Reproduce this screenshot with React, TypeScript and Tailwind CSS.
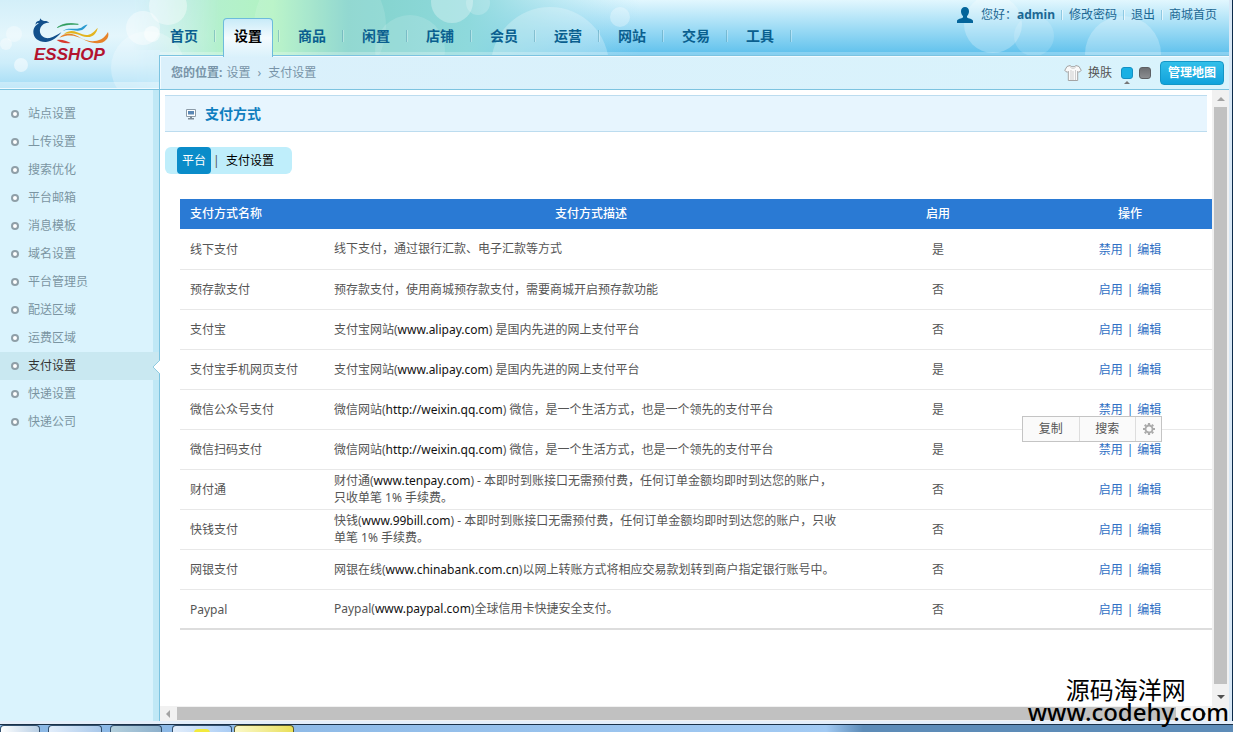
import { useState } from 'react';
import clsx from 'clsx';

const navItems = [
    '首页',
    '设置',
    '商品',
    '闲置',
    '店铺',
    '会员',
    '运营',
    '网站',
    '交易',
    '工具',
];

const sideItems = [
    '站点设置',
    '上传设置',
    '搜索优化',
    '平台邮箱',
    '消息模板',
    '域名设置',
    '平台管理员',
    '配送区域',
    '运费区域',
    '支付设置',
    '快递设置',
    '快递公司',
];

type Payment = {
    name: string;
    before: string;
    url?: string;
    after?: string;
    enabled: boolean;
    action: string;
};

const payments: Payment[] = [
    {
        name: '线下支付',
        before: '线下支付，通过银行汇款、电子汇款等方式',
        enabled: true,
        action: '禁用',
    },
    {
        name: '预存款支付',
        before: '预存款支付，使用商城预存款支付，需要商城开启预存款功能',
        enabled: false,
        action: '启用',
    },
    {
        name: '支付宝',
        before: '支付宝网站(',
        url: 'www.alipay.com',
        after: ') 是国内先进的网上支付平台',
        enabled: false,
        action: '启用',
    },
    {
        name: '支付宝手机网页支付',
        before: '支付宝网站(',
        url: 'www.alipay.com',
        after: ') 是国内先进的网上支付平台',
        enabled: true,
        action: '启用',
    },
    {
        name: '微信公众号支付',
        before: '微信网站(',
        url: 'http://weixin.qq.com',
        after: ') 微信，是一个生活方式，也是一个领先的支付平台',
        enabled: true,
        action: '禁用',
    },
    {
        name: '微信扫码支付',
        before: '微信网站(',
        url: 'http://weixin.qq.com',
        after: ') 微信，是一个生活方式，也是一个领先的支付平台',
        enabled: true,
        action: '禁用',
    },
    {
        name: '财付通',
        before: '财付通(',
        url: 'www.tenpay.com',
        after: ') - 本即时到账接口无需预付费，任何订单金额均即时到达您的账户，只收单笔 1% 手续费。',
        enabled: false,
        action: '启用',
    },
    {
        name: '快钱支付',
        before: '快钱(',
        url: 'www.99bill.com',
        after: ') - 本即时到账接口无需预付费，任何订单金额均即时到达您的账户，只收单笔 1% 手续费。',
        enabled: false,
        action: '启用',
    },
    {
        name: '网银支付',
        before: '网银在线(',
        url: 'www.chinabank.com.cn',
        after: ')以网上转账方式将相应交易款划转到商户指定银行账号中。',
        enabled: false,
        action: '启用',
    },
    {
        name: 'Paypal',
        before: 'Paypal(',
        url: 'www.paypal.com',
        after: ')全球信用卡快捷安全支付。',
        enabled: false,
        action: '启用',
    },
];

function HeaderArt() {
    return (
        <svg
            className="absolute inset-0 h-full w-full"
            viewBox="0 0 1233 90"
            preserveAspectRatio="xMinYMin slice"
            aria-hidden="true"
        >
            <defs>
                <linearGradient id="sky" x1="0" y1="0" x2="0" y2="1">
                    <stop offset="0" stopColor="#e2f7fe" />
                    <stop offset="0.5" stopColor="#9fdcf5" />
                    <stop offset="1" stopColor="#5dc0ec" />
                </linearGradient>
                <linearGradient id="green" x1="0" y1="0" x2="1" y2="0">
                    <stop offset="0" stopColor="#b9ead9" stopOpacity="0" />
                    <stop offset="0.14" stopColor="#b5eed5" />
                    <stop offset="0.32" stopColor="#b2f3c2" />
                    <stop offset="0.46" stopColor="#83d3cb" />
                    <stop offset="0.68" stopColor="#8ed9dc" />
                    <stop offset="1" stopColor="#9ddcf2" stopOpacity="0" />
                </linearGradient>
                <linearGradient id="corner" x1="0" y1="0" x2="0" y2="1">
                    <stop offset="0" stopColor="#d3eff9" />
                    <stop offset="0.4" stopColor="#e4f6fc" />
                    <stop offset="0.7" stopColor="#cdedfa" />
                    <stop offset="1" stopColor="#a0dbf5" />
                </linearGradient>
                <linearGradient id="cornerFade" x1="0" y1="0" x2="1" y2="0">
                    <stop offset="0.6" stopColor="#fff" />
                    <stop offset="1" stopColor="#000" />
                </linearGradient>
                <mask id="cornerMask">
                    <rect width="220" height="90" fill="url(#cornerFade)" />
                </mask>
            </defs>
            <rect width="1233" height="55" fill="url(#sky)" />
            <rect x="100" width="540" height="55" fill="url(#green)" />
            <rect width="160" y="50" height="40" fill="#bde8f8" />
            <rect
                width="220"
                height="90"
                fill="url(#corner)"
                mask="url(#cornerMask)"
            />
            <g fill="#fff">
                <circle cx="168" cy="6" r="19" opacity="0.4" />
                <circle cx="143" cy="28" r="17" opacity="0.4" />
                <circle cx="152" cy="34" r="8" opacity="0.5" />
                <circle cx="148" cy="68" r="37" opacity="0.25" />
                <circle cx="14" cy="34" r="8" opacity="0.35" />
                <circle cx="6" cy="44" r="6" opacity="0.4" />
                <circle cx="21" cy="65" r="7" opacity="0.5" />
                <circle cx="320" cy="26" r="66" opacity="0.12" />
                <circle cx="410" cy="50" r="35" opacity="0.14" />
                <circle cx="452" cy="2" r="21" opacity="0.3" />
                <circle cx="478" cy="3" r="12" opacity="0.2" />
                <circle cx="550" cy="66" r="59" opacity="0.25" />
                <circle cx="620" cy="17" r="10" opacity="0.3" />
                <circle cx="993" cy="24" r="29" opacity="0.25" />
                <circle cx="1034" cy="36" r="20" opacity="0.15" />
                <circle cx="1123" cy="54" r="38" opacity="0.25" />
            </g>
            <rect y="82" width="160" height="8" fill="#fff" opacity="0.35" />
            <rect
                x="160"
                y="52"
                width="1073"
                height="3"
                fill="#fff"
                opacity="0.25"
            />
        </svg>
    );
}

function Logo() {
    return (
        <a
            href="#home"
            className="relative flex w-40 shrink-0 flex-col pt-[17px] pl-[30px]"
        >
            <svg
                className="h-7 w-20"
                viewBox="90 50 240 84"
                fill="none"
                strokeLinecap="round"
                aria-hidden="true"
            >
                <path
                    d="M120 54c4 5 6 7 12 8 6-1 11 0 16 5-7 0-12 1-17 4-9 7-13 15-11 25 3 13 15 19 29 17 12-2 24-11 35-17-10 13-26 28-46 29-22 1-38-12-38-30 0-13 8-21 17-27-4-1-7 0-10 6-1-8 3-12 11-13 2-1 2-4 2-7z"
                    fill="#12508c"
                />
                <path
                    d="M173 81c14-10 28-14 62-9-22-1-38 0-62 9z"
                    fill="#2b9a57"
                    stroke="#2b9a57"
                    strokeWidth="2"
                />
                <path
                    d="M188 92c16-13 32-3 50-8 12-3 12-11 25-11-7 5-8 14-21 17-18 4-32-7-54 2z"
                    fill="#2a9bd0"
                />
                <path
                    d="M192 101c20-17 38-6 55 1 20 7 32-4 46-20-2 15-14 30-33 28-22-3-34-17-68-9z"
                    fill="#e3b420"
                />
                <path
                    d="M178 112c22-20 46-10 66 2 24 13 62 15 80-19 6 18-10 35-34 34-42-2-58-38-112-17z"
                    fill="#e6832a"
                />
                <path
                    d="M170 119c14-3 28 1 42 9-16 2-30-1-42-9z"
                    fill="#d83a2e"
                />
            </svg>
            <span className="pl-1 font-['Liberation_Sans',sans-serif] text-[17px] leading-5 font-bold text-[#b3132f] italic">
                ESSHOP
            </span>
        </a>
    );
}

function Divider() {
    return (
        <span className="h-2.5 w-0.5 border-r border-l border-r-white/60 border-l-[#8fc9e2]" />
    );
}

function UserBar() {
    return (
        <div className="absolute top-1 right-3 flex h-[22px] items-center gap-1.5 text-xs text-[#1b6793]">
            <svg
                className="mr-0.5 h-4 w-4"
                viewBox="0 0 16 16"
                fill="#04659b"
                aria-hidden="true"
            >
                <path d="M8 0c2.5 0 4 1.700 4 4.200 0 2-.8 3.800-2 4.800v1.400c1.200.9 6 1.400 6 3.600v2H0v-2c0-2.200 4.800-2.700 6-3.600V9C4.800 8 4 6.200 4 4.200 4 1.700 5.500 0 8 0z" />
            </svg>
            <span>
                您好：<b className="font-bold">admin</b>
            </span>
            <Divider />
            <a href="#password">修改密码</a>
            <Divider />
            <a href="#logout">退出</a>
            <Divider />
            <a href="#shop">商城首页</a>
        </div>
    );
}

function CrumbBar() {
    return (
        <div className="flex h-[35px] items-center justify-between border border-r-0 border-[#7cc3e0] bg-linear-to-r from-[#daf0fb] to-[#d9f3fc] pr-[5px] pl-[11px] text-xs text-[#7894a8] shadow-[inset_1px_1px_0_#f2fbff]">
            <div className="flex items-center gap-1">
                <b className="font-bold">您的位置:</b>
                <a href="#settings">设置</a>
                <span className="px-[3px]">›</span>
                <span>支付设置</span>
            </div>
            <div className="flex items-center">
                <svg
                    className="mr-1.5 h-[18px] w-[18px]"
                    viewBox="0 0 18 18"
                    aria-hidden="true"
                >
                    <path
                        d="M6 1.500c1 1.700 5 1.700 6 0l3 1 2.300 4-2.600 1.800-1-1V16.500H4.300V7.300l-1 1L.7 6.500l2.300-4z"
                        fill="#fafafa"
                        stroke="#a4a4a4"
                        strokeLinejoin="round"
                    />
                    <path
                        d="M6 2.500c1 2.500 5 2.500 6 0M7 6v10M9 7v9M11.500 6v10"
                        stroke="#cfcfcf"
                        fill="none"
                    />
                </svg>
                <span className="mr-[9px] text-[#555]">换肤</span>
                <button
                    aria-label="蓝色"
                    className="relative mr-1.5 h-3 w-3 rounded-[3px] border border-[#1490c4] bg-[#19b0e4]"
                >
                    <svg
                        className="absolute top-[13px] left-0.5 h-[3px] w-1.5"
                        viewBox="0 0 6 3"
                        aria-hidden="true"
                    >
                        <path d="M3 0l3 3H0z" fill="#777" />
                    </svg>
                </button>
                <button
                    aria-label="灰色"
                    className="mr-[9px] h-3 w-3 rounded-[3px] border border-[#5d5f63] bg-linear-to-b from-[#6c6e72] to-[#8b8d90]"
                />
                <button className="h-6 w-16 rounded border border-[#1496c6] bg-linear-to-b from-[#31bfe9] to-[#0fa2dc] text-xs font-bold text-white">
                    管理地图
                </button>
            </div>
        </div>
    );
}

function Sidebar({
    current,
    onSelect,
}: {
    current: string;
    onSelect: (s: string) => void;
}) {
    return (
        <aside className="w-[159px] shrink-0 border-r-[6px] border-[#c0e8f6] bg-[#daf3fd] pt-2.5">
            <ul>
                {sideItems.map((item) => (
                    <li key={item} className="relative">
                        <a
                            href="#menu"
                            onClick={() => onSelect(item)}
                            className={clsx(
                                'flex h-7 items-center gap-[9px] pl-[11px] text-xs',
                                item === current
                                    ? '-mr-1.5 bg-[#c9e8f1] text-[#333]'
                                    : 'text-[#7b95a2]'
                            )}
                        >
                            <i className="h-2 w-2 rounded-full border-2 border-[#8f9fa8] bg-white" />
                            {item}
                        </a>
                        {item === current && (
                            <svg
                                className="absolute top-2 -right-[7px] h-3.5 w-[7px]"
                                viewBox="0 0 7 14"
                                aria-hidden="true"
                            >
                                <path d="M7 0L0 7l7 7z" fill="#fff" />
                                <path
                                    d="M7 0L0 7l7 7"
                                    fill="none"
                                    stroke="#8fcbe0"
                                />
                            </svg>
                        )}
                    </li>
                ))}
            </ul>
        </aside>
    );
}

function PaymentTable() {
    return (
        <table className="w-full min-w-[1062px] table-fixed text-xs text-[#555]">
            <colgroup>
                <col className="w-36" />
                <col className="w-[534px]" />
                <col className="w-40" />
                <col />
            </colgroup>
            <thead>
                <tr className="h-[30px] bg-[#2a7ad4] text-white">
                    <th className="px-2.5 text-left font-medium">
                        支付方式名称
                    </th>
                    <th className="px-2.5 font-medium">支付方式描述</th>
                    <th className="font-medium">启用</th>
                    <th className="font-medium">操作</th>
                </tr>
            </thead>
            <tbody>
                {payments.map((p) => (
                    <tr
                        key={p.name}
                        className="h-10 border-b border-[#e8e8e8] last:border-b-2 last:border-[#ddd]"
                    >
                        <td className="px-2.5 pt-0.5">{p.name}</td>
                        <td className="pr-4 pl-2.5 leading-[17px]">
                            {p.before}
                            {p.url && (
                                <span className="text-[#111]">{p.url}</span>
                            )}
                            {p.after}
                        </td>
                        <td className="pt-0.5 text-center">
                            {p.enabled ? '是' : '否'}
                        </td>
                        <td className="pt-0.5">
                            <div className="flex justify-center gap-1 text-[#2f6fc4]">
                                <a href="#toggle">{p.action}</a>
                                <span>|</span>
                                <a href="#edit">编辑</a>
                            </div>
                        </td>
                    </tr>
                ))}
            </tbody>
        </table>
    );
}

function SelectionMenu() {
    return (
        <div className="absolute top-[217px] right-[50px] flex h-[26px] w-[140px] border border-[#c4c4c4] bg-[#fafafa] text-xs text-[#555]">
            <button className="flex-1 border-r border-[#ddd]">复制</button>
            <button className="flex-1 border-r border-[#ddd]">搜索</button>
            <button
                aria-label="选项"
                className="flex w-[25px] items-center justify-center"
            >
                <svg className="h-3 w-3" viewBox="0 0 12 12" fill="none">
                    <circle cx="6" cy="6" r="3.500" stroke="#aaa" strokeWidth="1.800" />
                    <path
                        d="M6 0v2M6 10v2M0 6h2M10 6h2M1.800 1.800l1.300 1.300M8.900 8.900l1.300 1.300M1.800 10.200l1.300-1.300M8.900 3.100l1.300-1.300"
                        stroke="#aaa"
                        strokeWidth="2.200"
                    />
                </svg>
            </button>
        </div>
    );
}

function Arrow({ d, color }: { d: string; color: string }) {
    return (
        <svg className="h-4 w-4 shrink-0" viewBox="0 0 16 16" aria-hidden="true">
            <path d={d} fill={color} />
        </svg>
    );
}

function Taskbar() {
    return (
        <footer className="h-[11px] shrink-0 bg-[#e4eefa] pt-[3px]">
            <div className="flex h-2 items-start border-t border-[#1b3148] bg-linear-to-r from-[#8db9e6] from-20% via-[#a2caf3] via-67% to-[#5d8cb8] to-70%">
                <span className="mr-2 h-2 w-10 rounded-t-sm border border-b-0 border-[#33506e] bg-linear-to-r from-white to-[#b9cfe5]" />
                <span className="mr-2 h-2 w-[54px] rounded-t-sm border border-b-0 border-[#33506e] bg-linear-to-r from-[#e3eefb] to-[#a9c8ea]" />
                <span className="mr-2.5 h-2 w-[52px] rounded-t-sm border border-b-0 border-[#33506e] bg-linear-to-r from-[#b4d0dd] to-[#8db0cc]" />
                <span className="mr-0.5 flex h-2 w-[60px] justify-center rounded-t-sm border border-b-0 border-[#33506e] bg-linear-to-r from-[#e3eefb] to-[#a9ccf4] pt-[3px]">
                    <i className="h-1 w-4 rounded-t-full bg-[#f2ea3c]" />
                </span>
                <span className="h-2 w-[60px] rounded-t-sm border border-b-0 border-[#5a5a30] bg-linear-to-r from-[#fbf9c8] to-[#e9df55]" />
            </div>
        </footer>
    );
}

export default function App() {
    const [tab, setTab] = useState<string>('设置');
    const [menu, setMenu] = useState<string>('支付设置');

    return (
        <div className="relative flex h-screen w-full flex-col overflow-hidden bg-white font-['Noto_Sans','Noto_Sans_CJK_SC',sans-serif]">
            <div className="flex min-h-0 flex-1 flex-col border-r border-[#0c2b4a]">
                <div className="flex min-h-0 flex-1 flex-col border-r-[3px] border-[#d8e8f6]">
                    <header className="relative flex h-[90px] shrink-0 overflow-hidden">
                        <HeaderArt />
                        <Logo />
                        <div className="absolute bottom-0 left-0 h-0.5 w-40 border-t border-b border-t-[#effaff] border-b-[#7cc3e0]" />
                        <div className="relative -ml-px flex min-w-0 flex-1 flex-col">
                            <nav className="-ml-2 flex h-[55px] items-end pl-px">
                                {navItems.map((item) => (
                                    <div
                                        key={item}
                                        className="relative z-10 flex w-16 justify-center"
                                    >
                                        <a
                                            href="#nav"
                                            onClick={() => setTab(item)}
                                            className={clsx(
                                                'flex w-[50px] justify-center text-sm font-bold',
                                                item === tab
                                                    ? '-mb-0.5 h-[39px] rounded-t border border-b-0 border-[#6dbbdc] bg-linear-to-b from-[#c8ebf8] via-[#f4fbfe] to-[#daf1fb] pt-[7px] text-black'
                                                    : 'h-[37px] pt-2 text-[#0a5f8f]'
                                            )}
                                        >
                                            {item}
                                        </a>
                                        <i className="absolute top-3 right-0 h-3 w-0.5 border-r border-l border-r-white/30 border-l-[#5d9fb4]/50" />
                                    </div>
                                ))}
                            </nav>
                            <CrumbBar />
                            <UserBar />
                        </div>
                    </header>
                    <div className="flex min-h-0 flex-1">
                        <Sidebar current={menu} onSelect={setMenu} />
                        <div className="flex min-w-0 flex-1 flex-col border-l border-[#7cc3e0]">
                            <div className="flex min-h-0 flex-1">
                                <main className="min-w-0 flex-1 overflow-hidden pt-[5px]">
                                    <h1 className="mx-[5px] flex h-[37px] items-center gap-2 border-t border-b border-[#bcdcef] bg-[#e7f5fe] pl-5 text-sm font-bold text-[#0f7ebf]">
                                        <svg
                                            className="h-3 w-3"
                                            viewBox="0 0 12 12"
                                            aria-hidden="true"
                                        >
                                            <path
                                                d="M1.500 1.500h9v7h-9z"
                                                fill="#fff"
                                                stroke="#8c9ba8"
                                            />
                                            <path
                                                d="M3 3h6v3.500H3z"
                                                fill="#5b88b5"
                                            />
                                            <path
                                                d="M5 8.500h2V10h2v1.500H3V10h2z"
                                                fill="#7d8b98"
                                            />
                                        </svg>
                                        支付方式
                                    </h1>
                                    <div className="mt-[15px] ml-[5px] flex h-[27px] w-fit items-center rounded-md bg-[#bfeefb] pr-[18px] pl-3 text-xs text-black">
                                        <button className="h-[27px] w-[34px] rounded bg-[#0a8cc9] text-white">
                                            平台
                                        </button>
                                        <span className="w-[15px] pl-0.5 text-[#555]">
                                            |
                                        </span>
                                        <button>支付设置</button>
                                    </div>
                                    <div className="relative mt-[25px] ml-5">
                                        <PaymentTable />
                                        <SelectionMenu />
                                    </div>
                                </main>
                                <div className="flex w-[17px] flex-col items-center bg-[#f1f1f1]">
                                    <Arrow
                                        d="M8 7l4 4H4z"
                                        color="#a3a3a3"
                                    />
                                    <div className="mt-px mb-1.5 w-[13px] flex-1 bg-[#c1c1c1]" />
                                    <Arrow
                                        d="M4 5h8l-4 4z"
                                        color="#505050"
                                    />
                                </div>
                            </div>
                            <div className="flex h-[15px] items-center bg-[#f1f1f1] pr-[17px]">
                                <Arrow d="M10 4v8L6 8z" color="#a3a3a3" />
                                <div className="mr-5 ml-px h-[13px] flex-1 bg-[#c1c1c1]" />
                                <Arrow d="M6 4v8l4-4z" color="#505050" />
                            </div>
                        </div>
                    </div>
                </div>
            </div>
            <Taskbar />
            <div className="pointer-events-none absolute right-1 bottom-2.5 flex flex-col text-black">
                <span className="pl-[38px] text-2xl leading-6">源码海洋网</span>
                <span className="text-2xl leading-5 font-medium">
                    www.codehy.com
                </span>
            </div>
        </div>
    );
}
